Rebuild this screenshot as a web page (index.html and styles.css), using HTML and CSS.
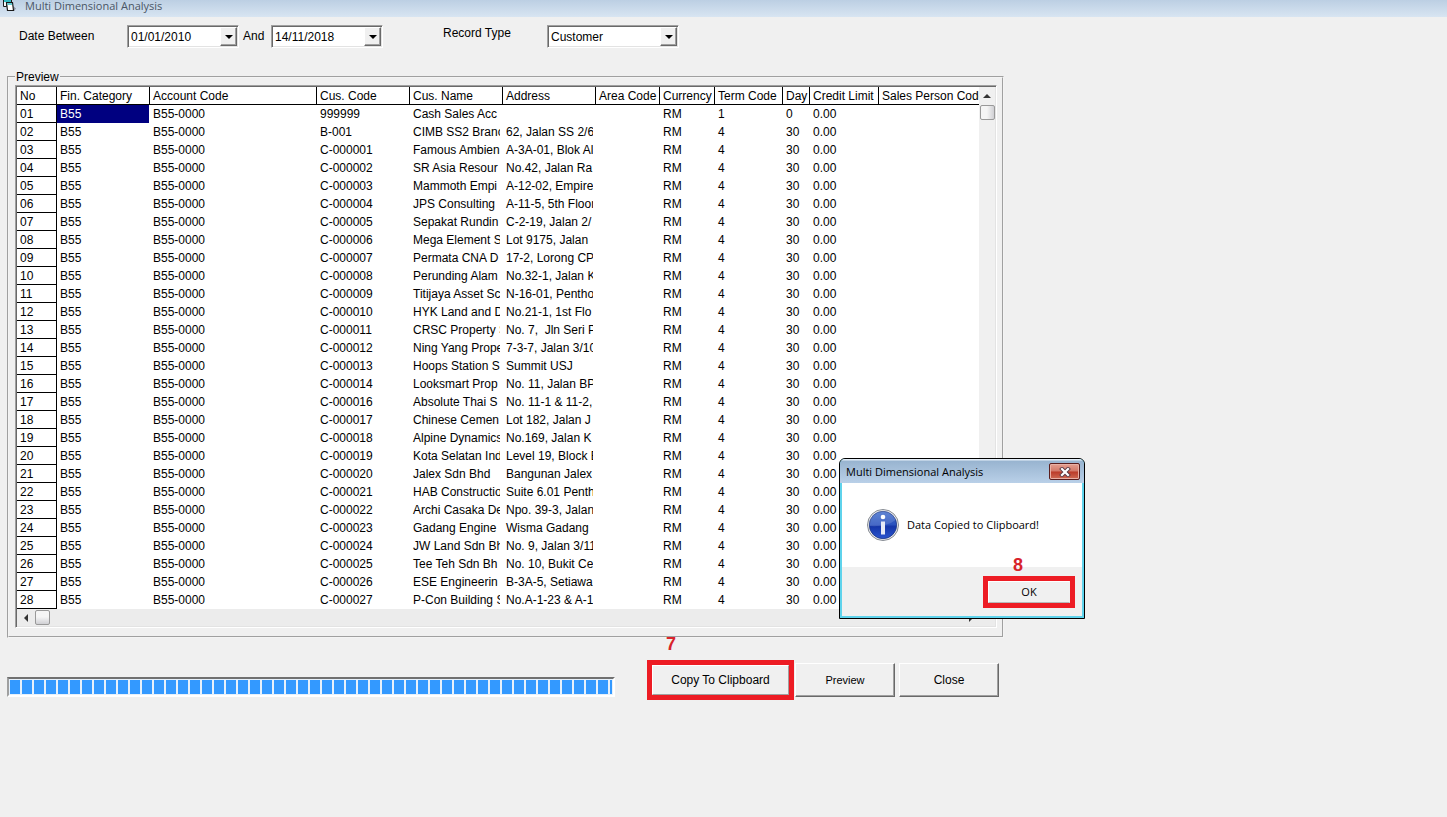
FILE: index.html
```html
<!DOCTYPE html>
<html lang="en">
<head>
<meta charset="utf-8">
<title>Multi Dimensional Analysis</title>
<link rel="stylesheet" href="styles.css">
</head>
<body>
<header class="titlebar">
  <svg class="app-icon" width="14" height="14" viewBox="0 0 14 14" aria-hidden="true">
    <path d="M11 6L14 8.500L12 11Z" fill="#8d93a3"/>
    <path d="M1.500 -1V6.500H4.500V-1Z" fill="#f4f8fa" stroke="#1a1a1a"/>
    <path d="M2 0H9V2H2Z" fill="#2fb8c0"/>
    <path d="M9.500 0V2.500" stroke="#1a1a1a"/>
    <path d="M4.500 2.500H10.500L11.500 10.500H5.500Z" fill="#fff" stroke="#1a1a1a" stroke-width="1.200"/>
    <path d="M5.200 3.200H10L10.200 4.800H5.400Z" fill="#2fb8c0"/>
  </svg>
  <h1 class="title">Multi Dimensional Analysis</h1>
</header>
<main class="form">
  <div class="filters">
    <label class="filter-label date-label" for="from">Date Between</label>
    <span class="combo"><select id="from"><option>01/01/2010</option></select><span class="arrow"></span></span>
    <label class="and-label" for="to">And</label>
    <span class="combo"><select id="to"><option>14/11/2018</option></select><span class="arrow"></span></span>
    <label class="record-label" for="type">Record Type</label>
    <span class="combo wide"><select id="type"><option>Customer</option></select><span class="arrow"></span></span>
  </div>
  <fieldset class="preview">
    <legend>Preview</legend>
    <div class="grid-box">
      <div class="grid-view">
        <table class="grid">
          <colgroup><col class="c-no"><col class="c-m"><col class="c-acc"><col class="c-m"><col class="c-m"><col class="c-m"><col class="c-area"><col class="c-cur"><col class="c-term"><col class="c-day"><col class="c-limit"><col class="c-sales"></colgroup>
          <thead><tr><th>No</th><th>Fin. Category</th><th>Account Code</th><th>Cus. Code</th><th>Cus. Name</th><th>Address</th><th>Area Code</th><th>Currency</th><th>Term Code</th><th>Day</th><th>Credit Limit</th><th>Sales Person Code</th></tr></thead>
          <tbody>
<tr><th>01</th><td class="selected">B55</td><td>B55-0000</td><td>999999</td><td>Cash Sales Acc</td><td></td><td></td><td>RM</td><td>1</td><td>0</td><td>0.00</td><td></td></tr>
<tr><th>02</th><td>B55</td><td>B55-0000</td><td>B-001</td><td>CIMB SS2 Branch</td><td>62, Jalan SS 2/6</td><td></td><td>RM</td><td>4</td><td>30</td><td>0.00</td><td></td></tr>
<tr><th>03</th><td>B55</td><td>B55-0000</td><td>C-000001</td><td>Famous Ambien</td><td>A-3A-01, Blok All</td><td></td><td>RM</td><td>4</td><td>30</td><td>0.00</td><td></td></tr>
<tr><th>04</th><td>B55</td><td>B55-0000</td><td>C-000002</td><td>SR Asia Resour</td><td>No.42, Jalan Ra</td><td></td><td>RM</td><td>4</td><td>30</td><td>0.00</td><td></td></tr>
<tr><th>05</th><td>B55</td><td>B55-0000</td><td>C-000003</td><td>Mammoth Empi</td><td>A-12-02, Empire</td><td></td><td>RM</td><td>4</td><td>30</td><td>0.00</td><td></td></tr>
<tr><th>06</th><td>B55</td><td>B55-0000</td><td>C-000004</td><td>JPS Consulting</td><td>A-11-5, 5th Floor</td><td></td><td>RM</td><td>4</td><td>30</td><td>0.00</td><td></td></tr>
<tr><th>07</th><td>B55</td><td>B55-0000</td><td>C-000005</td><td>Sepakat Rundin</td><td>C-2-19, Jalan 2/</td><td></td><td>RM</td><td>4</td><td>30</td><td>0.00</td><td></td></tr>
<tr><th>08</th><td>B55</td><td>B55-0000</td><td>C-000006</td><td>Mega Element S</td><td>Lot 9175, Jalan</td><td></td><td>RM</td><td>4</td><td>30</td><td>0.00</td><td></td></tr>
<tr><th>09</th><td>B55</td><td>B55-0000</td><td>C-000007</td><td>Permata CNA D</td><td>17-2, Lorong CP</td><td></td><td>RM</td><td>4</td><td>30</td><td>0.00</td><td></td></tr>
<tr><th>10</th><td>B55</td><td>B55-0000</td><td>C-000008</td><td>Perunding Alam</td><td>No.32-1, Jalan K</td><td></td><td>RM</td><td>4</td><td>30</td><td>0.00</td><td></td></tr>
<tr><th>11</th><td>B55</td><td>B55-0000</td><td>C-000009</td><td>Titijaya Asset Sc</td><td>N-16-01, Pentho</td><td></td><td>RM</td><td>4</td><td>30</td><td>0.00</td><td></td></tr>
<tr><th>12</th><td>B55</td><td>B55-0000</td><td>C-000010</td><td>HYK Land and D</td><td>No.21-1, 1st Flo</td><td></td><td>RM</td><td>4</td><td>30</td><td>0.00</td><td></td></tr>
<tr><th>13</th><td>B55</td><td>B55-0000</td><td>C-000011</td><td>CRSC Property S</td><td>No. 7,&nbsp; Jln Seri P</td><td></td><td>RM</td><td>4</td><td>30</td><td>0.00</td><td></td></tr>
<tr><th>14</th><td>B55</td><td>B55-0000</td><td>C-000012</td><td>Ning Yang Prope</td><td>7-3-7, Jalan 3/10</td><td></td><td>RM</td><td>4</td><td>30</td><td>0.00</td><td></td></tr>
<tr><th>15</th><td>B55</td><td>B55-0000</td><td>C-000013</td><td>Hoops Station S</td><td>Summit USJ</td><td></td><td>RM</td><td>4</td><td>30</td><td>0.00</td><td></td></tr>
<tr><th>16</th><td>B55</td><td>B55-0000</td><td>C-000014</td><td>Looksmart Prop</td><td>No. 11, Jalan BP</td><td></td><td>RM</td><td>4</td><td>30</td><td>0.00</td><td></td></tr>
<tr><th>17</th><td>B55</td><td>B55-0000</td><td>C-000016</td><td>Absolute Thai S</td><td>No. 11-1 &amp; 11-2,</td><td></td><td>RM</td><td>4</td><td>30</td><td>0.00</td><td></td></tr>
<tr><th>18</th><td>B55</td><td>B55-0000</td><td>C-000017</td><td>Chinese Cemen</td><td>Lot 182, Jalan J</td><td></td><td>RM</td><td>4</td><td>30</td><td>0.00</td><td></td></tr>
<tr><th>19</th><td>B55</td><td>B55-0000</td><td>C-000018</td><td>Alpine Dynamics</td><td>No.169, Jalan K</td><td></td><td>RM</td><td>4</td><td>30</td><td>0.00</td><td></td></tr>
<tr><th>20</th><td>B55</td><td>B55-0000</td><td>C-000019</td><td>Kota Selatan Ind</td><td>Level 19, Block B</td><td></td><td>RM</td><td>4</td><td>30</td><td>0.00</td><td></td></tr>
<tr><th>21</th><td>B55</td><td>B55-0000</td><td>C-000020</td><td>Jalex Sdn Bhd</td><td>Bangunan Jalex</td><td></td><td>RM</td><td>4</td><td>30</td><td>0.00</td><td></td></tr>
<tr><th>22</th><td>B55</td><td>B55-0000</td><td>C-000021</td><td>HAB Constructio</td><td>Suite 6.01 Penth</td><td></td><td>RM</td><td>4</td><td>30</td><td>0.00</td><td></td></tr>
<tr><th>23</th><td>B55</td><td>B55-0000</td><td>C-000022</td><td>Archi Casaka De</td><td>Npo. 39-3, Jalan</td><td></td><td>RM</td><td>4</td><td>30</td><td>0.00</td><td></td></tr>
<tr><th>24</th><td>B55</td><td>B55-0000</td><td>C-000023</td><td>Gadang Engine</td><td>Wisma Gadang</td><td></td><td>RM</td><td>4</td><td>30</td><td>0.00</td><td></td></tr>
<tr><th>25</th><td>B55</td><td>B55-0000</td><td>C-000024</td><td>JW Land Sdn Bh</td><td>No. 9, Jalan 3/11</td><td></td><td>RM</td><td>4</td><td>30</td><td>0.00</td><td></td></tr>
<tr><th>26</th><td>B55</td><td>B55-0000</td><td>C-000025</td><td>Tee Teh Sdn Bh</td><td>No. 10, Bukit Ce</td><td></td><td>RM</td><td>4</td><td>30</td><td>0.00</td><td></td></tr>
<tr><th>27</th><td>B55</td><td>B55-0000</td><td>C-000026</td><td>ESE Engineerin</td><td>B-3A-5, Setiawa</td><td></td><td>RM</td><td>4</td><td>30</td><td>0.00</td><td></td></tr>
<tr><th>28</th><td>B55</td><td>B55-0000</td><td>C-000027</td><td>P-Con Building S</td><td>No.A-1-23 &amp; A-1-</td><td></td><td>RM</td><td>4</td><td>30</td><td>0.00</td><td></td></tr>
          </tbody>
        </table>
      </div>
      <div class="vscroll"><span class="tri up"></span><span class="thumb"></span></div>
      <div class="hscroll"><span class="tri left"></span><span class="thumb flat"></span><span class="tri right"></span></div>
    </div>
  </fieldset>
  <div class="actions">
    <progress class="progress" value="100" max="100" aria-label="Copy progress"></progress>
    <div class="marked copy-mark">
      <span class="step copy-step">7</span>
      <button class="btn" type="button">Copy To Clipboard</button>
    </div>
    <button class="btn small" type="button">Preview</button>
    <button class="btn last" type="button">Close</button>
  </div>
</main>
<section class="dialog" role="dialog" aria-labelledby="dlg-title">
  <div class="dialog-bar">
    <h2 class="dialog-title" id="dlg-title">Multi Dimensional Analysis</h2>
    <button class="dialog-close" type="button" aria-label="Close dialog">
      <svg width="12" height="10" viewBox="0 0 12 10" aria-hidden="true">
        <path d="M3 2L9 8M9 2L3 8" stroke="#5c3b45" stroke-width="4" stroke-linecap="square"/>
        <path d="M3 2L9 8M9 2L3 8" stroke="#fff" stroke-width="2.200" stroke-linecap="square"/>
      </svg>
    </button>
  </div>
  <div class="dialog-body">
    <svg width="32" height="32" viewBox="0 0 32 32" aria-hidden="true">
      <defs><linearGradient id="ball" x1="0" y1="0" x2="0" y2="1"><stop offset="0" stop-color="#4470cc"/><stop offset=".48" stop-color="#2a52be"/><stop offset=".56" stop-color="#1536a8"/><stop offset="1" stop-color="#2a55d0"/></linearGradient></defs>
      <circle cx="16" cy="16" r="15.500" fill="#eee" stroke="#858a92"/>
      <circle cx="16" cy="16" r="13.700" fill="url(#ball)" stroke="#1c3684" stroke-width=".8"/>
      <path d="M3 17A13 13 0 0 1 28.500 11Q20 18 3 17Z" fill="#fff" opacity=".14"/>
      <circle cx="16" cy="8" r="2.300" fill="#fff"/>
      <path d="M14 12.500H18V25.500H14Z" fill="#e6eaf6"/>
    </svg>
    <p class="message">Data Copied to Clipboard!</p>
  </div>
  <div class="dialog-foot">
    <div class="marked ok-mark">
      <span class="step ok-step">8</span>
      <button class="ok" type="button">OK</button>
    </div>
  </div>
</section>
</body>
</html>
```
FILE: styles.css
```css
* { box-sizing: border-box; }
body {
  margin: 0;
  min-height: 100vh;
  position: relative;
  background: #f0f0f0;
  color: #000;
  font: 12px/16px "Liberation Sans", Arial, sans-serif;
}
button, select { font: inherit; color: inherit; }
h1, h2, p { margin: 0; font-weight: normal; }

.titlebar {
  display: flex;
  gap: 9px;
  height: 17px;
  padding-left: 2px;
  background: linear-gradient(#bccfe3, #d8e5f2);
}
.title, .dialog { font-family: "Open Sans", "Noto Sans", sans-serif; }
.title { font-size: 11px; line-height: 12px; color: #4a5665; }

.form { padding: 8px 7px 0; max-width: 1020px; }
.filters { display: flex; align-items: flex-start; padding-left: 12px; }
.filters label { padding-top: 3px; }
.date-label { width: 108px; }
.and-label { padding-left: 4px; width: 32px; }
.filters .record-label { width: 104px; margin-left: 60px; padding-top: 0; }

.combo, .grid-box {
  border: 1px solid;
  border-color: #a0a0a0 #fff #fff #a0a0a0;
  box-shadow: inset 1px 1px #696969, inset -1px -1px #e3e3e3;
  padding: 1px;
}
.combo {
  display: grid;
  grid-template-columns: 1fr 17px;
  width: 112px;
  height: 23px;
  background: #fff;
}
.combo.wide { width: 132px; }
.combo select {
  grid-area: 1 / 1 / 2 / 3;
  appearance: none;
  border: 0;
  padding: 0 20px 0 2px;
  background: transparent;
}
.arrow {
  grid-area: 1 / 2;
  display: grid;
  place-items: center;
  pointer-events: none;
}
.arrow, .btn {
  background: #f0f0f0;
  border: 1px solid;
  border-color: #fff #696969 #696969 #fff;
  box-shadow: inset -1px -1px #a0a0a0;
}
.arrow::before {
  content: "";
  border: 4px solid transparent;
  border-top-color: #000;
  border-bottom: 0;
}

.preview {
  margin: 21px 9px 0 0;
  padding: 0 5px 8px 6px;
  border: 2px groove #f4f4f4;
  min-width: 0;
}
.preview legend { padding: 0 1px; margin-left: 0; }
.grid-box {
  display: grid;
  grid-template-columns: minmax(0, 1fr) 16px;
  background: #ececec;
}
.grid-view { overflow: hidden; background: #fff; }
.grid {
  table-layout: fixed;
  width: 963px;
  border-collapse: separate;
  border-spacing: 0;
}
.c-no { width: 40px; }
.c-m { width: 93px; }
.c-acc { width: 167px; }
.c-area { width: 64px; }
.c-cur { width: 55px; }
.c-term { width: 68px; }
.c-day { width: 27px; }
.c-limit { width: 69px; }
.c-sales { width: 101px; }
.grid th, .grid td {
  height: 18px;
  padding: 0 0 0 3px;
  overflow: hidden;
  white-space: nowrap;
  text-align: left;
  font-weight: normal;
}
.grid th { border: solid #000; border-width: 0 1px 1px 0; }
.grid thead th:last-child { border-right: 0; }
.grid td { border-right: 3px solid #fff; }
.grid .selected { background: #000080; color: #fff; border-right-width: 1px; }

.vscroll { display: flex; flex-direction: column; align-items: center; gap: 7px; padding-top: 7px; background: #f0f0f0; }
.hscroll { grid-column: 1 / 3; display: flex; align-items: center; gap: 7px; height: 17px; padding: 0 22px 0 7px; }
.tri { border: 4px solid transparent; }
.tri.up { border-top: 0; border-bottom-color: #333; }
.tri.left { border-left: 0; border-right-color: #333; }
.tri.right { border-right: 0; border-left-color: #333; margin-left: auto; }
.thumb {
  width: 15px;
  height: 15px;
  border: 1px solid #999;
  border-radius: 2px;
  background: linear-gradient(90deg, #f5f5f5 45%, #d0d0d4);
}
.thumb.flat { background: linear-gradient(#f5f5f5 45%, #d0d0d4); }

.actions { display: flex; align-items: center; margin: 22px 14px 0 0; }
.progress {
  appearance: none;
  flex: 1;
  min-width: 0;
  height: 20px;
  margin: 14px 32px 0 0;
  padding: 1px;
  border: 2px solid;
  border-color: #707070 #fff #fff #a0a0a0;
  background: #e6f0fa;
}
.progress::-webkit-progress-bar { background: transparent; }
.progress::-webkit-progress-value { background: repeating-linear-gradient(90deg, #3399ff 0 10px, #e6f0fa 10px 12px); }
.marked { position: relative; border: 5px solid #ed1c24; display: flex; }
.copy-mark { width: 147px; height: 40px; }
.step {
  position: absolute;
  color: #d8232a;
  font: bold 18px/20px "Liberation Sans", Arial, sans-serif;
}
.copy-step { left: 14px; top: -31px; }
.btn {
  width: 100px;
  height: 34px;
  margin-left: 1px;
  padding: 0;
}
.marked .btn { flex: 1; height: auto; margin: 0; border-color: #fff #a0a0a0 #a0a0a0 #fff; box-shadow: none; }
.btn.small { font-size: 11px; }
.btn.last { margin-left: 4px; }

.dialog {
  position: absolute;
  left: 839px;
  top: 458px;
  width: 246px;
  border: 1px solid #000;
  border-radius: 6px 6px 0 0;
  background: #5fd3ec;
  overflow: hidden;
  font-size: 11px;
}
.dialog-bar {
  display: flex;
  justify-content: space-between;
  height: 24px;
  padding: 4px 4px 0 6px;
  background: linear-gradient(#e4eef8 0 1px, #98b4d0 2px, #b9d0e8);
}
.dialog-title { font-size: 11px; line-height: 18px; }
.dialog-close {
  display: grid;
  place-items: center;
  width: 31px;
  height: 17px;
  padding: 0;
  border: 1px solid #5a1d1d;
  border-radius: 2px;
  background: linear-gradient(#e5a091, #d27767 48%, #bb3a28 52%, #cf6a54);
  box-shadow: inset 0 0 0 1px #e9b0a5;
}
.dialog-body {
  display: flex;
  align-items: center;
  gap: 8px;
  height: 84px;
  margin: 0 2px;
  padding-left: 25px;
  background: #fff;
}
.dialog-foot {
  display: flex;
  justify-content: flex-end;
  height: 49px;
  margin: 0 2px 2px;
  padding: 9px 7px 0 0;
  background: #f0f0f0;
}
.ok-mark { width: 92px; height: 32px; }
.ok { flex: 1; padding: 0; border: 1px solid; border-color: #fff #f0f0f0 #b8b8b8 #fff; background: #f0f0f0; }
.ok-step { left: 25px; top: -26px; }
```
